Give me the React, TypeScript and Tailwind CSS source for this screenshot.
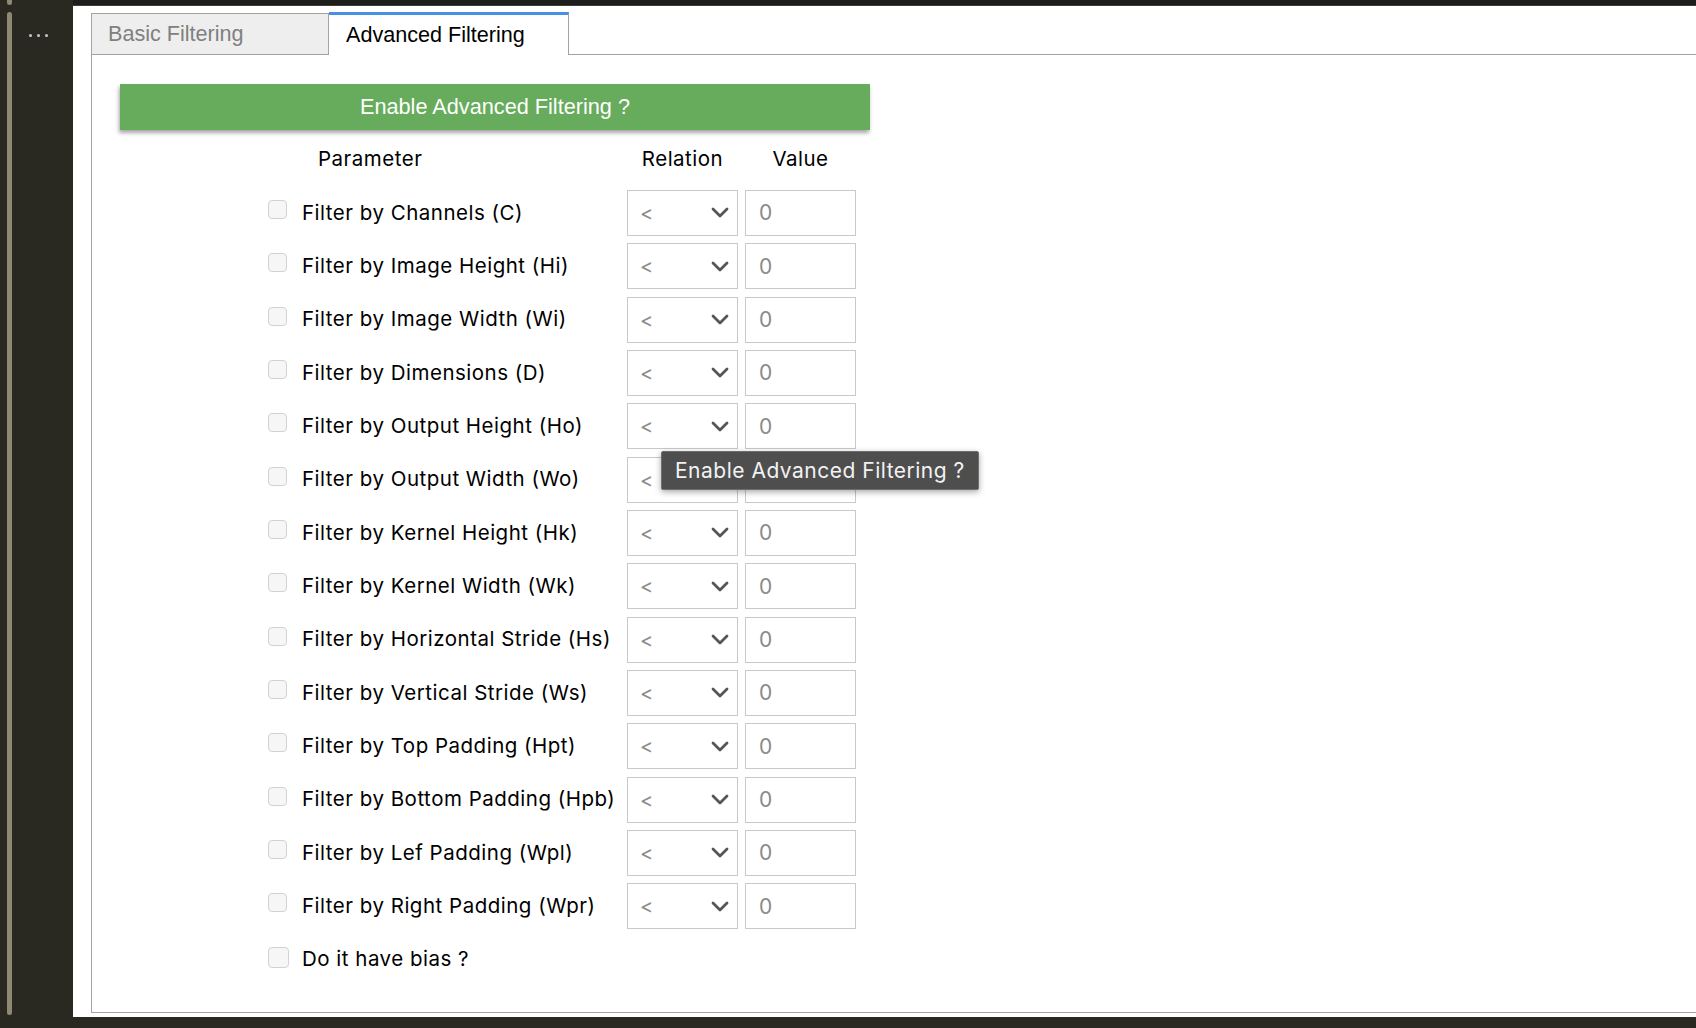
const filters = [
  "Filter by Channels (C)",
  "Filter by Image Height (Hi)",
  "Filter by Image Width (Wi)",
  "Filter by Dimensions (D)",
  "Filter by Output Height (Ho)",
  "Filter by Output Width (Wo)",
  "Filter by Kernel Height (Hk)",
  "Filter by Kernel Width (Wk)",
  "Filter by Horizontal Stride (Hs)",
  "Filter by Vertical Stride (Ws)",
  "Filter by Top Padding (Hpt)",
  "Filter by Bottom Padding (Hpb)",
  "Filter by Lef Padding (Wpl)",
  "Filter by Right Padding (Wpr)",
];

function Checkbox() {
  return (
    <span className="mb-[7px] h-[19px] w-[19px] shrink-0 rounded-[4px] border border-[#d2d2d2] bg-[#f6f6f6]" />
  );
}

function Chevron() {
  return (
    <svg width="18" height="11" viewBox="0 0 18 11" aria-hidden="true">
      <path
        d="M2 2 L9 9 L16 2"
        fill="none"
        stroke="#555555"
        strokeWidth="2.8"
        strokeLinecap="round"
        strokeLinejoin="round"
      />
    </svg>
  );
}

function FilterRow({ label }: { label: string }) {
  return (
    <div className="flex h-[53.33px] items-center">
      <div className="flex w-[359px] items-center gap-[15px]">
        <Checkbox />
        <span className="text-[20.5px] tracking-[0.5px] whitespace-nowrap text-black">{label}</span>
      </div>
      <div className="flex h-[46px] w-[111px] items-center justify-between border border-[#c9c9c9] pr-[8px] pl-[12px]">
        <span className="text-[20px] text-[#8a8a8a]">&lt;</span>
        <Chevron />
      </div>
      <div className="ml-[7px] flex h-[46px] w-[111px] items-center border border-[#c9c9c9] pl-[13px]">
        <span className="text-[21px] text-[#8a8a8a]">0</span>
      </div>
    </div>
  );
}

export default function App() {
  return (
    <div className="relative flex h-[1028px] w-[1696px] bg-[#292922]">
      {/* side bar */}
      <div className="flex w-[73px] shrink-0 items-start pl-[7px]">
        <div className="flex flex-col gap-[7px]">
          <div className="h-[5px] w-[5px] rounded-b-full bg-[#8e8874]" />
          <div className="h-[1003px] w-[5px] rounded-full bg-[#8e8874]" />
        </div>
        <div className="mt-[34px] ml-[17px] flex gap-[5px]">
          <span className="h-[3px] w-[3px] rounded-full bg-[#c8c8c8]" />
          <span className="h-[3px] w-[3px] rounded-full bg-[#c8c8c8]" />
          <span className="h-[3px] w-[3px] rounded-full bg-[#c8c8c8]" />
        </div>
      </div>

      {/* main */}
      <div className="flex flex-1 flex-col">
        <div className="h-[6px] border-b border-[#3c3c38] bg-[#1d1d1b]" />
        <div className="flex h-[1011px] flex-col bg-white pt-[7px] pb-[4px] pl-[18px]">
          {/* tabs */}
          <div className="flex h-[42px] items-end font-['Liberation_Sans',Arial,sans-serif] text-[21.6px]">
            <div className="flex h-[42px] w-[238px] items-center border border-[#a3a3a3] bg-[#eeeeee] pl-[16px] text-[#808080]">
              Basic Filtering
            </div>
            <div className="flex h-[43px] w-[240px] items-center border-t-[3px] border-r border-t-[#4a90e2] border-r-[#a3a3a3] bg-white pl-[17px] text-black">
              Advanced Filtering
            </div>
            <div className="h-[42px] flex-1 border-b border-[#a3a3a3]" />
          </div>

          {/* panel */}
          <div className="flex flex-1 flex-col border-b border-l border-[#a3a3a3]">
            <button
              type="button"
              className="mt-[29px] ml-[28px] flex h-[46px] w-[750px] items-center justify-center bg-[#67ac5c] font-['Liberation_Sans',Arial,sans-serif] text-[21.7px] text-white shadow-[-1px_3px_4px_rgba(0,0,0,0.35)]"
            >
              Enable Advanced Filtering ?
            </button>

            <div className="mt-[3px] ml-[176px] flex flex-col font-['Inter','Noto_Sans',sans-serif]">
              <div className="flex h-[53.33px] items-center text-[20.5px] tracking-[0.5px] text-black">
                <div className="w-[359px] pl-[50px]">Parameter</div>
                <div className="w-[111px] text-center">Relation</div>
                <div className="ml-[7px] w-[111px] text-center">Value</div>
              </div>
              {filters.map((label) => (
                <FilterRow key={label} label={label} />
              ))}
              <div className="flex h-[53.33px] items-center">
                <div className="flex items-center gap-[13px]">
                  <span className="mb-[5px] h-[21px] w-[21px] shrink-0 rounded-[4px] border border-[#d2d2d2] bg-[#f6f6f6]" />
                  <span className="text-[20.5px] tracking-[0.5px] text-black">Do it have bias ?</span>
                </div>
              </div>
            </div>
          </div>
        </div>
      </div>

      {/* tooltip */}
      <div className="absolute top-[451px] left-[661px] flex h-[39px] w-[318px] items-center rounded-[2px] border border-[#6e6e6e] bg-[#4e4e4e] pl-[13px] font-['Inter','Noto_Sans',sans-serif] text-[21px] tracking-[0.5px] whitespace-nowrap text-[#f2f2f2] shadow-[0_2px_6px_rgba(0,0,0,0.35)]">
        Enable Advanced Filtering ?
      </div>
    </div>
  );
}
